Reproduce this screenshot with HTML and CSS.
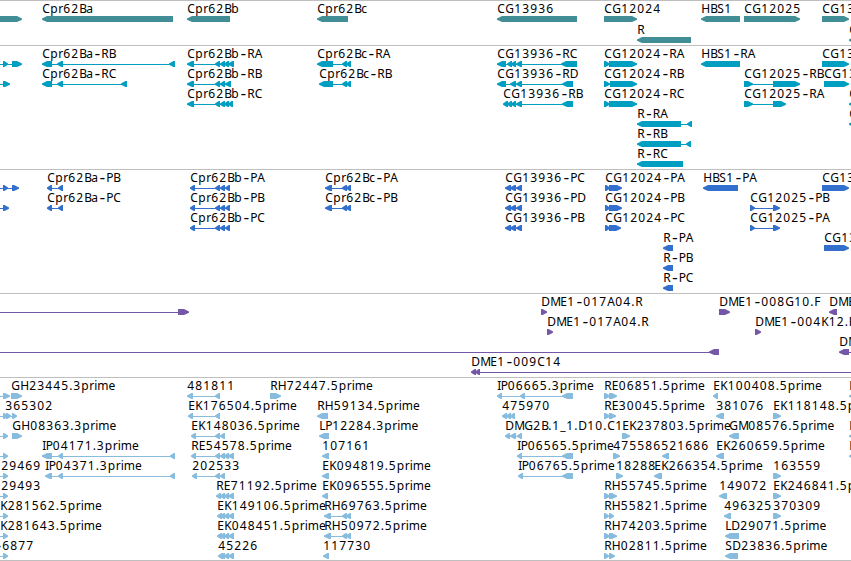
FILE: index.html
```html
<!DOCTYPE html>
<html lang="en">
<head>
<meta charset="utf-8">
<title>Genome tracks</title>
<link rel="stylesheet" href="styles.css">
</head>
<body>
<main class="tracks">
  <section class="track track--gene"></section>
  <section class="track track--mrna"></section>
  <section class="track track--cds"></section>
  <section class="track track--bac"></section>
  <section class="track track--est"></section>
</main>
<script src="tracks.js"></script>
</body>
</html>
```
FILE: styles.css
```css
body {
  margin: 0;
  background: #fff;
}

.tracks {
  display: flex;
  flex-direction: column;
  width: 851px;
  border-bottom: 1px solid #bfbfbf;
  overflow: hidden;
}

.track {
  box-sizing: border-box;
  border-top: 1px solid #bfbfbf;
  overflow: hidden;
}

.track--gene { height: 45px; color: #418e96; }
.track--mrna { height: 124px; color: #009fc1; }
.track--cds { height: 124px; color: #336fcc; }
.track--bac { height: 84px; color: #7557a7; }
.track--est { height: 183px; color: #87bcde; }

.canvas {
  display: block;
  width: 851px;
  height: 100%;
}

.glyph {
  fill: currentColor;
}

.label {
  fill: #000;
  font: 12px "Noto Sans", "DejaVu Sans", sans-serif;
}

.dash {
  font: 16px "DejaVu Sans", sans-serif;
}
```
FILE: tracks.js
```js
// One line per feature: row, strand, label (or "."), label x, exons, optional intron line extent.
const tracks = {
  gene: { pitch: 21, rows: `
0 > . 0 -5-22
0 < Cpr62Ba 42 42-173
0 < Cpr62Bb 187 187-230
0 < Cpr62Bc 317 317-348
0 < CG13936 497 497-577
0 > CG12024 604 604-637
0 < HBS1 701 701-740
0 > CG12025 744 744-800
0 > CG13 822 822-849
1 < R 637 637-691
1 < C 849 849-860` },
  mrna: { pitch: 20, rows: `
0 > . 0 3-8,12-22 -5-20
0 < Cpr62Ba-RB 42 42-52,57-63,169-175
0 < Cpr62Bb-RA 187 187-194,215-220,220-225,224-229,228-234
0 < Cpr62Bc-RA 317 317-333,342-347,346-351
0 < CG13936-RC 497 497-506,507-512,511-516,516-522,561-577
0 > CG12024-RA 604 604-610,609-637
0 < HBS1-RA 701 701-740
0 > CG13 822 822-827,823-849
1 > . 0 3-10 -5-8
1 < Cpr62Ba-RC 42 42-52,57-63,121-127
1 < Cpr62Bb-RB 187 187-194,215-220,220-225,225-231
1 < Cpr62Bc-RB 319 319-333,342-347,346-351
1 < CG13936-RD 497 497-506,510-516,516-522,562-573
1 > CG12024-RB 604 604-610,610-637
1 > CG12025-RB 744 744-753,773-800
1 > CG13 824 824-849
2 < Cpr62Bb-RC 187 187-194,215-220,220-225,224-229,228-233
2 < CG13936-RB 503 503-508,507-512,511-516,516-522,562-573
2 > CG12024-RC 604 604-610,609-637
2 > CG12025-RA 744 744-753,773-786
2 < C 849 849-860
3 < R-RA 637 637-681,687-692
3 < C 849 849-860
4 < R-RB 637 637-681,686-691
5 < R-RC 637 637-683` },
  cds: { pitch: 20, rows: `
0 > . 0 3-8,12-19 -5-17
0 < Cpr62Ba-PB 47 47-52,58-63
0 < Cpr62Bb-PA 190 190-195,215-220,220-225,225-230
0 < Cpr62Bc-PA 325 325-332,342-347,346-351
0 < CG13936-PC 505 505-511,510-516,516-522
0 > CG12024-PA 605 605-610,609-622
0 < HBS1-PA 703 703-738
0 > CG13 822 822-827,823-849
1 > . 0 3-9 -5-7
1 < Cpr62Ba-PC 47 47-52,58-63
1 < Cpr62Bb-PB 190 190-195,215-220,220-225,225-230
1 < Cpr62Bc-PB 325 325-332,342-347,346-351
1 < CG13936-PD 505 505-511,510-516,516-522
1 > CG12024-PB 605 605-610,609-622
1 > CG12025-PB 750 750-755,773-780
2 < Cpr62Bb-PC 190 190-195,215-220,220-225,225-230
2 < CG13936-PB 505 505-511,510-516,516-522
2 > CG12024-PC 605 605-610,609-621
2 > CG12025-PA 750 750-755,773-780
3 < R-PA 663 663-673
3 > CG13 824 824-849
4 < R-PB 663 663-673
5 < R-PC 663 663-673` },
  bac: { pitch: 20, rows: `
0 > . 0 178-189 -5-185
0 > DME1-017A04.R 541 541-547
0 > DME1-008G10.F 719 719-730
0 < DME 829 829-837
1 > DME1-017A04.R 547 547-553
1 > DME1-004K12.F 755 755-761
2 < . 0 709-719 -5-715
2 < DM 839 839-849 845-860
3 < DME1-009C14 471 471-476,475-480 475-860` },
  est: { pitch: 20, rows: `
0 > . 0 3-10 -5-8
0 > GH23445.3prime 11 11-22
0 < 481811 187 187-193,215-220
0 > RH72447.5prime 270 270-281
0 < IP06665.3prime 497 497-502,520-525,562-573
0 > RE06851.5prime 604 604-610,609-617
0 < EK100408.5prime 713 713-718
0 < R 849 849-860
1 > 365302 5 3-8,6-11,12-17 -5-14
1 < EK176504.5prime 188 188-193,215-220
1 < RH59134.5prime 317 317-328
1 < 475970 502 502-507,506-511,510-515
1 > RE30045.5prime 604 604-610,609-616
1 < 381076 716 716-724
1 > EK118148.5prime 773 773-781
2 > . 0 3-8 -5-6
2 > GH08363.3prime 12 12-22
2 < EK148036.5prime 191 191-196,215-220,220-225
2 < LP12284.3prime 319 319-329
2 < DMG2B.1_1.D10.C1 505 505-510,510-516,517-522
2 > EK237803.5prime 622 622-630
2 < GM08576.5prime 729 729-739
2 < R 849 849-860
3 > . 0 3-8 -5-6
3 < IP04171.3prime 42 42-52,58-63,170-175
3 < RE54578.5prime 191 191-196,215-220,220-225,224-229,228-234
3 < 107161 322 322-329
3 < IP06565.5prime 517 517-522,562-573
3 > 475586 613 613-620
3 < 521686 661 662-669
3 < EK260659.5prime 716 716-724
3 < R 849 849-860
4 > 29469 1 3-8 -5-6
4 < IP04371.3prime 45 45-52,58-63,170-175
4 < 202533 192 192-197,215-220,220-225
4 < EK094819.5prime 322 322-329
4 < IP06765.5prime 518 518-523,562-573
4 > 18288 616 616-623
4 < EK266354.5prime 654 654-662
4 > 163559 773 773-781
5 > 29493 1 3-8 -5-6
5 < RE71192.5prime 216 216-221,220-225,224-229,228-234
5 < EK096555.5prime 322 322-328
5 > RH55745.5prime 604 604-610,609-617
5 < 149072 719 719-727
5 > EK246841.5prime 773 773-781
6 > K281562.5prime 0 3-8 -5-6
6 < EK149106.5prime 217 217-222,220-225,224-229,228-234
6 < RH69763.5prime 324 324-331,342-347,346-351
6 > RH55821.5prime 604 604-609,609-614
6 < 496325 724 724-731
6 > 370309 773 773-781
7 > K281643.5prime 0 3-8 -5-6
7 < EK048451.5prime 217 217-222,220-225,224-229,228-234
7 < RH50972.5prime 324 324-331,342-347,346-351
7 > RH74203.5prime 604 604-610,609-617
7 < LD29071.5prime 725 725-739
8 > -6877 -6 3-8 -5-6
8 < 45226 218 218-223,220-225,224-229,228-234
8 < 117730 323 323-329
8 > RH02811.5prime 604 604-609,609-615
8 < SD23836.5prime 725 725-738` }
};

// Label letter pitch in pixels; every other character is 8 wide.
const advance = { G: 9, H: 9, D: 9, M: 10, R: 7.5, K: 7.5, B: 7, P: 7, E: 7, S: 7, L: 6,
  I: 3.5, F: 7, a: 7, c: 6, r: 5, i: 3, m: 11.3, e: 7, '.': 4, _: 6 };

const NS = 'http://www.w3.org/2000/svg';
function add(parent, name, attrs) {
  const el = document.createElementNS(NS, name);
  for (const key in attrs) el.setAttribute(key, attrs[key]);
  parent.appendChild(el);
  return el;
}
function range(text) {
  const m = text.match(/^(-?\d+)-(\d+)$/);
  return [Number(m[1]), Number(m[2])];
}

for (const name in tracks) {
  const { pitch, rows } = tracks[name];
  const svg = add(document.querySelector('.track--' + name), 'svg', { class: 'canvas' });
  for (const line of rows.trim().split('\n')) {
    const [row, strand, label, labelX, exonText, intron] = line.split(' ');
    const top = row * pitch + 15;
    const exons = exonText.split(',').map(range);
    const [from, to] = intron ? range(intron) : [exons[0][0] + 2, exons[exons.length - 1][1] - 2];
    if (intron || exons.length > 1) {
      add(svg, 'rect', { class: 'glyph', x: from, y: top + 3, width: to - from, height: 1 });
    }
    for (const [a, b] of exons) {
      const head = Math.min(5, (b - a) * 0.75);
      const tip = strand === '<' ? a : b;
      const neck = strand === '<' ? a + head : b - head;
      const tail = strand === '<' ? b : a;
      add(svg, 'path', { class: 'glyph',
        d: `M${tip} ${top + 2.6}L${neck} ${top}H${tail}V${top + 6}H${neck}L${tip} ${top + 3.8}Z` });
    }
    if (label !== '.') {
      let x = Number(labelX) + 0.3;
      const text = add(svg, 'text', { class: 'label', y: top - 3 });
      for (const part of label.split(/(-)/).filter(Boolean)) {
        const xs = [];
        for (const ch of part) {
          xs.push(ch === '-' ? x + 1.2 : x);
          x += advance[ch] || 8;
        }
        const attrs = { x: xs.join(' '), y: part === '-' ? top - 2 : top - 3 };
        if (part === '-') attrs.class = 'dash';
        add(text, 'tspan', attrs).textContent = part;
      }
    }
  }
}
```
